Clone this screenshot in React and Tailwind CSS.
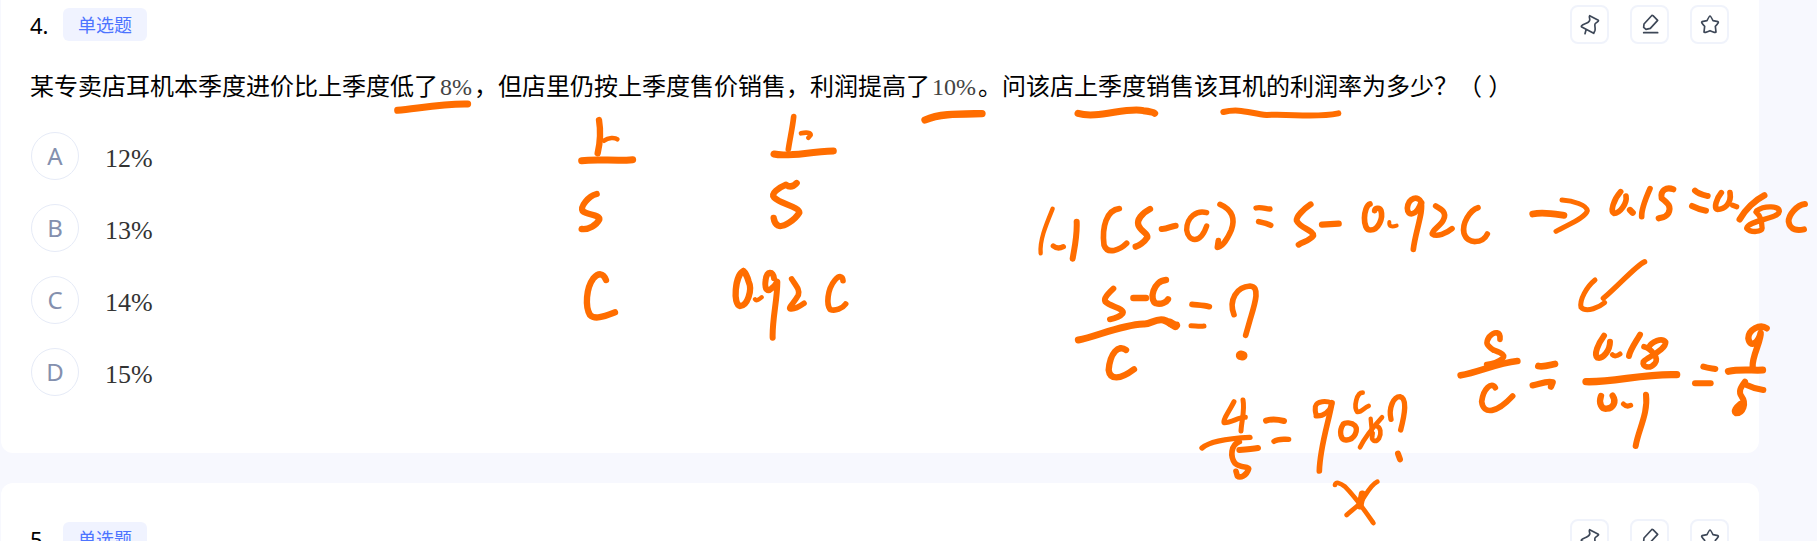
const options = [
  { key: "A", value: "12%" },
  { key: "B", value: "13%" },
  { key: "C", value: "14%" },
  { key: "D", value: "15%" },
];

/* Pen strokes: each layer is a patch of the canvas drawn at triple resolution.
   Each stroke is [path, width]. */
const inkLayers = [
  { x: 0, y: 0, strokes: [["M1193 331 C1250 326 1330 310 1403 312", 18]] },
  {
    x: 500,
    y: 60,
    strokes: [
      ["M297 180 C302 210 300 250 293 280", 16],
      ["M312 242 C325 232 345 232 352 238", 11],
      ["M245 302 C290 296 350 304 398 299", 18],
      ["M881 170 C878 200 870 235 865 268", 14],
      ["M903 220 C920 216 932 218 932 225 L925 233", 11],
      ["M822 282 C860 292 920 276 1000 273", 18],
      ["M290 402 C265 408 240 440 248 453 C260 465 300 464 298 478 C290 495 265 510 245 507", 16],
      ["M890 369 C878 382 868 382 858 374 C835 384 812 400 822 412 C840 432 898 440 898 458 C885 480 850 503 835 497 C826 492 822 482 821 474", 16],
      ["M318 660 C310 638 295 638 280 655 C258 685 255 740 270 765 C285 780 310 770 345 757", 16],
      ["M730 633 C705 645 698 735 720 738 C742 738 758 690 746 665 C742 650 738 640 730 633", 16],
      ["M765 718 C770 725 778 717 785 712", 10],
      ["M822 655 C820 632 800 632 797 660 C792 692 805 695 815 685 C825 678 830 668 832 665 C832 720 816 780 818 833", 15],
      ["M875 657 C890 680 900 690 895 705 C885 725 865 742 870 746 C885 750 905 735 912 730", 14],
      ["M1029 662 C1028 648 1018 645 1005 660 C980 690 980 735 990 748 C1005 755 1028 745 1037 732", 14],
    ],
  },
  {
    x: 930,
    y: 60,
    strokes: [
      ["M-15 180 C30 160 90 162 156 161", 19],
      ["M444 160 C500 178 590 140 640 152 C660 154 668 155 674 160", 18],
      ["M880 156 C930 144 960 160 1010 165 C1080 160 1150 175 1225 160", 15],
    ],
  },
  {
    x: 1020,
    y: 190,
    strokes: [
      ["M98 56 C80 100 58 150 62 190", 10],
      ["M100 168 C110 176 118 176 130 170", 13],
      ["M170 95 C172 140 162 180 158 206", 15],
      ["M298 56 C260 60 245 110 252 165 C262 195 300 180 320 160", 14],
      ["M390 57 C365 70 350 90 355 105 C362 125 385 130 382 142 C372 158 355 168 347 170", 16],
      ["M425 117 C440 118 455 108 467 107", 15],
      ["M560 68 C530 60 500 80 500 120 C505 155 540 165 560 108", 13],
      ["M600 43 C640 60 645 90 634 120 C622 148 605 172 592 172 L595 152", 14],
      ["M708 54 C725 50 740 58 750 57", 13],
      ["M716 95 C730 98 740 100 752 106", 14],
      ["M280 296 C265 310 250 325 256 335 C270 350 315 355 308 370 C300 380 285 385 270 388", 15],
      ["M340 324 H378", 16],
      ["M438 270 C400 272 386 330 408 340 C425 345 440 335 444 328", 16],
      ["M175 450 C230 440 300 405 370 402 C390 405 405 385 430 390 C450 395 455 410 470 405", 18],
      ["M450 398 L466 408", 22],
      ["M318 480 C295 462 270 490 266 540 C270 570 300 570 342 538", 16],
      ["M516 343 C530 345 550 345 568 350", 14],
      ["M513 407 C525 407 538 410 552 408", 12],
      ["M642 374 C625 330 650 290 690 288 C722 290 705 340 690 390 L677 436", 14],
      ["M662 496 L668 497", 26],
    ],
  },
  {
    x: 1250,
    y: 170,
    strokes: [
      ["M182 103 C160 118 138 140 140 152 C150 175 190 180 190 197 C180 212 160 215 146 224", 15],
      ["M216 164 L266 161", 16],
      ["M360 102 C340 108 335 182 362 180 C385 180 400 145 393 122 C388 110 375 115 374 122", 14],
      ["M418 156 C416 170 425 172 440 167", 9],
      ["M515 98 C505 75 475 82 472 115 C472 140 500 138 513 98 C522 120 495 190 490 238", 14],
      ["M557 108 C575 118 592 128 580 150 C570 170 545 180 547 192 C560 202 590 190 606 176", 14],
      ["M684 113 C660 120 635 160 642 190 C652 225 700 220 712 192", 14],
    ],
  },
  {
    x: 1500,
    y: 170,
    strokes: [
      ["M98 132 C130 125 165 132 192 136", 17],
      ["M186 90 C220 92 260 105 262 122 C255 145 200 165 168 184", 12],
      ["M362 65 C340 90 330 125 342 130 C360 130 382 100 378 78", 14],
      ["M390 120 L398 128", 16],
      ["M450 56 C435 90 424 120 425 140", 14],
      ["M520 58 C500 50 480 60 485 85 C505 100 515 110 505 130 C495 145 485 142 476 145", 15],
      ["M585 62 C595 72 610 75 623 78", 15],
      ["M576 108 C590 115 605 120 618 122", 15],
      ["M664 68 C650 85 640 115 652 118 C675 118 695 100 690 68", 14],
      ["M698 106 L710 110", 13],
      ["M793 76 C765 90 735 120 719 148", 16],
      ["M770 122 C795 105 838 108 838 124 C835 148 745 150 740 175 C750 188 790 188 786 172 C785 155 784 140 768 126", 13],
      ["M915 102 C890 105 865 135 866 155 C870 182 895 182 912 178", 15],
      ["M285 330 C260 350 238 390 243 412 C260 430 300 410 314 398", 12],
      ["M434 275 C410 285 360 342 310 385", 13],
    ],
  },
  {
    x: 1430,
    y: 310,
    strokes: [
      ["M210 88 C212 65 195 62 178 80 C165 100 170 105 190 120 C215 130 230 135 215 148 C200 160 185 162 170 164", 14],
      ["M92 196 C150 185 200 160 262 153", 17],
      ["M196 233 C185 215 160 235 155 275 C160 315 200 310 248 258", 14],
      ["M325 168 C340 172 360 165 375 162", 17],
      ["M308 226 C330 222 350 212 368 217 L363 230", 16],
      ["M522 77 C505 100 490 135 502 143 C520 148 540 120 540 95", 15],
      ["M547 134 C552 140 562 138 570 132", 12],
      ["M630 74 C615 100 600 120 597 138", 15],
      ["M642 110 C665 116 688 145 675 160 C660 178 635 172 640 155 C655 140 708 120 707 96 C695 82 665 95 656 112", 14],
      ["M468 215 C550 218 640 190 740 194", 19],
      ["M513 258 C505 280 515 298 530 296 C550 295 560 275 548 257", 16],
      ["M580 282 C588 290 594 290 602 286", 12],
      ["M648 254 C655 310 625 360 617 408", 15],
      ["M820 170 C835 175 845 175 856 177", 15],
      ["M795 220 H842", 15],
      ["M1010 55 C990 40 955 60 955 85 C960 115 985 100 992 68 C995 90 965 140 968 170", 16],
      ["M895 184 C930 176 970 182 998 180", 18],
      ["M945 215 C930 235 925 245 935 260 C950 280 940 310 918 310 C908 305 920 290 930 282", 15],
      ["M950 225 C970 235 985 238 1000 240", 15],
    ],
  },
  {
    x: 1180,
    y: 370,
    strokes: [
      ["M162 95 C150 120 128 150 132 158 C150 160 180 140 196 142", 12],
      ["M189 90 C195 120 185 150 183 183", 12],
      ["M66 234 C90 212 150 205 210 202", 13],
      ["M178 215 C152 225 150 260 165 280 C180 295 205 288 206 296 C200 318 180 325 172 318 L168 304", 14],
      ["M178 240 C200 238 220 236 234 234", 15],
      ["M258 152 C280 145 300 150 312 153", 15],
      ["M282 214 C295 205 310 208 326 208", 13],
      ["M408 138 C430 140 450 125 456 100 C440 92 410 92 406 110 C405 120 406 130 410 138", 12],
      ["M456 98 C445 160 420 230 418 303", 14],
      ["M490 162 C475 185 482 212 500 210 C525 208 535 180 525 167 C515 157 495 157 490 162", 13],
      ["M606 142 C585 165 555 200 540 232", 11],
      ["M572 146 L577 200", 10],
      ["M578 190 C570 215 588 218 597 205 C605 190 602 172 590 168", 11],
      ["M548 68 C530 68 520 110 532 126 C545 128 553 112 566 108", 11],
      ["M633 148 C625 115 640 80 660 80 C682 85 675 130 662 180", 13],
      ["M654 251 L660 268", 15],
      ["M465 345 C466 334 480 338 495 350 C530 385 560 430 580 459", 11],
      ["M592 335 C570 345 555 380 540 400 C525 415 510 425 500 435", 11],
      ["M547 372 L540 408", 18],
    ],
  },
];

/* Extra width the marker tip adds to every stroke. */
const TIP = 3;

function Ink() {
  return (
    <svg
      className="pointer-events-none absolute left-0 top-0 h-[541px] w-[1817px] max-w-none"
      viewBox="0 0 1817 541"
      fill="none"
      stroke="#ff6d00"
      strokeLinecap="round"
      strokeLinejoin="round"
      aria-hidden="true"
    >
      {inkLayers.map((layer) => (
        <g
          key={`${layer.x}-${layer.y}`}
          transform={`translate(${layer.x} ${layer.y}) scale(0.33333)`}
        >
          {layer.strokes.map(([d, width]) => (
            <path key={d} d={d} strokeWidth={width + TIP} />
          ))}
        </g>
      ))}
    </svg>
  );
}

function Icon({ children }) {
  return (
    <svg
      className="size-6"
      viewBox="0 0 72 72"
      fill="none"
      stroke="#3d4757"
      strokeWidth="5"
      strokeLinecap="round"
      strokeLinejoin="round"
      aria-hidden="true"
    >
      {children}
    </svg>
  );
}

function IconButton({ label, children }) {
  return (
    <button
      type="button"
      aria-label={label}
      className="flex size-[39px] items-center justify-center rounded-lg border-2 border-[#f0f3fb] bg-white"
    >
      <Icon>{children}</Icon>
    </button>
  );
}

function QuestionHeader({ number }) {
  return (
    <header className="flex items-center justify-between">
      <div className="flex items-center gap-[13px]">
        <span className="w-5 text-[22px] leading-8 text-black">{number}.</span>
        <span className="flex h-[33px] items-center rounded-md bg-[#f0f3ff] px-[15px] text-lg text-[#4d74ff]">
          单选题
        </span>
      </div>
      <div className="flex gap-[21px]">
        <IconButton label="标记">
          <path d="M35 8 L61 22 C64 25 53 29 51 33 C49 38 53 46 51 52 L47 61 L10 41 C9 36 19 34 25 31 C31 28 37 23 35 17 C34 14 33 11 35 8 Z M24 51 L21 62" />
        </IconButton>
        <IconButton label="笔记">
          <path d="M45 8 L59 22 L37 46 L24 49 L17 43 L18 33 L40 9 Q42 6 45 8 Z M17 59 H59" />
        </IconButton>
        <IconButton label="收藏">
          <path d="M36 9 Q38 9 45 23 L60 26 Q64 28 52 40 L54 57 Q53 61 36 53 Q19 61 18 57 L20 40 Q8 28 12 26 L27 23 Q34 9 36 9 Z" />
        </IconButton>
      </div>
    </header>
  );
}

function Formula({ children }) {
  return (
    <span className="mx-[2px] font-['Liberation_Serif',serif] text-[#444]">
      {children}
    </span>
  );
}

export default function App() {
  return (
    <div className="relative h-screen overflow-hidden bg-[#f7f8fe] pl-px font-['Noto_Sans','Noto_Sans_CJK_SC',sans-serif]">
      <main className="mr-[58px] flex flex-col gap-[30px]">
        <article className="rounded-b-xl bg-white pb-[57px] pl-[29px] pr-[30px] pt-[5px]">
          <QuestionHeader number={4} />
          <p className="mt-[22px] text-2xl leading-10 text-black">
            某专卖店耳机本季度进价比上季度低了<Formula>8%</Formula>
            ，但店里仍按上季度售价销售，利润提高了<Formula>10%</Formula>
            。问该店上季度销售该耳机的利润率为多少？（ ）
          </p>
          <fieldset
            aria-label="选项"
            className="mt-[25px] flex flex-col items-start gap-6"
          >
            {options.map((option) => (
              <label
                key={option.key}
                className="flex cursor-pointer items-center gap-[26px] pl-px"
              >
                <span className="grid size-12 place-items-center rounded-full border border-[#e6ebf7] text-2xl text-[#8490ae]">
                  <input
                    type="radio"
                    name="question-4"
                    value={option.key}
                    className="col-start-1 row-start-1 size-11 appearance-none rounded-full"
                  />
                  <span className="col-start-1 row-start-1">{option.key}</span>
                </span>
                <span className="pt-[6px] font-['Liberation_Serif',serif] text-[26px] leading-8 text-[#333]">
                  {option.value}
                </span>
              </label>
            ))}
          </fieldset>
        </article>
        <article className="rounded-t-xl bg-white pl-[29px] pr-[30px] pt-9">
          <QuestionHeader number={5} />
        </article>
      </main>
      <Ink />
    </div>
  );
}
